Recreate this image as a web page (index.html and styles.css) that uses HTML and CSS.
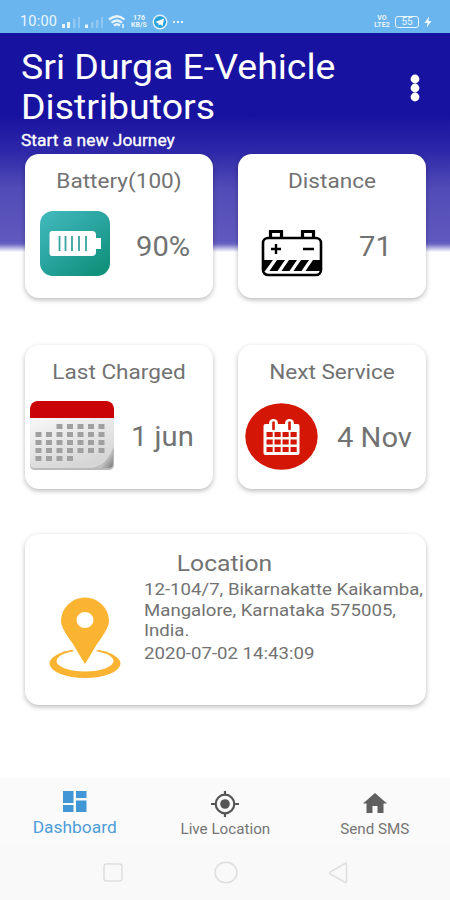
FILE: index.html
```html
<!DOCTYPE html>
<html lang="en">
<head>
<meta charset="utf-8">
<title>Sri Durga E-Vehicle Distributors</title>
<link rel="stylesheet" href="styles.css">
</head>
<body>
<div class="status">
  <span class="clock">10:00</span>
  <svg class="signals" width="42" height="14" viewBox="0 0 42 14" fill="#e9f5fd">
    <path d="M0 9h3v4H0zM5 7h3v6H5z"/><path opacity=".3" d="M11 4h2.500v9H11zM16 2h2v11h-2zM29 7h2.500v6H29zM34 5h2.500v8H34zM39 2h2v11h-2z"/><path d="M23 9.500h3V13h-3z"/>
  </svg>
  <svg class="wifi" width="18" height="14" viewBox="0 0 18 14" fill="none" stroke="#e9f5fd" stroke-width="2.300">
    <path d="M1 4.500q8-6.500 15.500 0M3.500 7.700q5.500-4.500 10.500 0M6 10.500q3-2.500 6 0"/><path d="M9 12.500h.1M15 9v4" stroke-width="1.500"/>
  </svg>
  <span class="tiny speed">176<br>KB/S</span>
  <svg class="plane" width="16" height="16" viewBox="0 0 16 16"><circle cx="8" cy="8" r="6.800" fill="#2aa3dc" stroke="#e2f3fc" stroke-width="1.400"/><path d="M3.500 8 12 4.500 10.600 12 8 10.200 6.500 11.500 6.300 9.200Z" fill="#fff"/></svg>
  <span class="dots"><i></i><i></i><i></i></span>
  <span class="tiny volte">VO<br>LTE2</span>
  <span class="level">55</span>
  <svg class="bolt" width="8" height="12" viewBox="0 0 8 12"><path d="M5 .5.500 7H3.500L2.800 11.500 7.500 5H4.500Z" fill="#f0f9ff"/></svg>
</div>
<main>
  <header>
    <div>
      <h1>Sri Durga E-Vehicle<br>Distributors</h1>
      <p class="tagline">Start a new Journey</p>
    </div>
    <svg class="menu" width="12" height="28" viewBox="0 0 12 28" fill="#fff"><circle cx="6" cy="5" r="4.400"/><circle cx="6" cy="14" r="4.400"/><circle cx="6" cy="23" r="4.400"/></svg>
  </header>
  <section class="cards">
    <article class="card battery">
      <h2>Battery(100)</h2>
      <div class="row">
        <svg width="70" height="65" viewBox="0 0 70 65">
          <defs><linearGradient id="teal" x1="0" y1="0" x2=".8" y2="1"><stop offset="0" stop-color="#43b9bd"/><stop offset=".5" stop-color="#2aa5a1"/><stop offset="1" stop-color="#10917a"/></linearGradient></defs>
          <rect width="70" height="65" rx="13" fill="url(#teal)"/>
          <path d="M12 20H52Q56 20 56 24V27H61V38H56V41Q56 45 52 45H12Q9.500 45 9.500 42V23Q9.500 20 12 20Z" fill="#fff"/>
          <path d="M19.500 25V40M25.500 25V40M32 25V40M39 25V40M46 25V40" stroke="#38a49f" stroke-width="1.800"/>
        </svg>
        <span class="value">90%</span>
      </div>
    </article>
    <article class="card distance">
      <h2>Distance</h2>
      <div class="row">
        <svg width="62" height="48" viewBox="0 0 62 48">
          <g fill="none" stroke="#000"><path stroke-width="3.200" d="M9.500 9V2.500H20.500V9M41.500 9V2.500H52.500V9"/><rect stroke-width="2.600" x="2" y="9" width="58" height="37" rx="5"/></g>
          <path d="M10 20H20M15 15V25M42 20H53" stroke="#000" stroke-width="2.400"/>
          <path d="M2 31H12L4 42H2ZM16 31H24L16.500 42H8.500ZM28 31H36L28.500 42H20.500ZM40 31H48L40.500 42H32.500ZM52 31H60V42H44.500Z"/>
        </svg>
        <span class="value">71</span>
      </div>
    </article>
    <article class="card charged">
      <h2>Last Charged</h2>
      <div class="row">
        <svg width="84" height="69" viewBox="0 0 84 69">
          <defs><linearGradient id="page" x1="0" y1="0" x2=".5" y2="1"><stop offset="0" stop-color="#f8f8f8"/><stop offset="1" stop-color="#d6d6d6"/></linearGradient>
          <linearGradient id="fold" x1=".3" y1=".3" x2="1" y2="1"><stop offset="0" stop-color="#eee"/><stop offset="1" stop-color="#777"/></linearGradient></defs>
          <path d="M0 16H84V64Q84 69 78 69H5Q0 69 0 64Z" fill="#b9b9b9"/>
          <path d="M0 16H84V46Q78 64 62 67H5Q0 67 0 62Z" fill="url(#page)"/>
          <path d="M83 46Q80 58 68 67H79Q83 67 83 62Z" fill="url(#fold)"/>
          <path d="M0 17V7Q1 1 7 0H77Q83 1 84 7V17Z" fill="#c90306"/>
          <g stroke="#a0a0a0" stroke-width="5" stroke-dasharray="6 4.500"><path d="M26.500 25.500H76M5.500 33.500H76M5.500 41.500H76M5.500 49.500H76M5.500 57.500H44"/></g>
        </svg>
        <span class="value">1 jun</span>
      </div>
    </article>
    <article class="card service">
      <h2>Next Service</h2>
      <div class="row">
        <svg width="73" height="67" viewBox="0 0 73 67">
          <ellipse cx="36.500" cy="33.500" rx="36.200" ry="33.300" fill="#d31704"/>
          <rect x="18.500" y="21" width="36" height="31" rx="2" fill="#fff"/>
          <rect x="24" y="16" width="9" height="14" rx="4.500" fill="#fff"/><rect x="40" y="16" width="9" height="14" rx="4.500" fill="#fff"/>
          <path d="M28.500 19.500V26M44.500 19.500V26" stroke="#d31704" stroke-width="2.600" stroke-linecap="round"/>
          <path d="M21.500 31.500H52M21.500 39H52M21.500 46.500H52" stroke="#d31704" stroke-width="4.900" stroke-dasharray="6.200 1.800"/>
        </svg>
        <span class="value">4 Nov</span>
      </div>
    </article>
    <article class="card location">
      <svg width="72" height="82" viewBox="0 0 72 82">
        <ellipse cx="36" cy="66.500" rx="35.500" ry="14.500" fill="#fbb431"/>
        <ellipse cx="36" cy="64" rx="28.500" ry="10.500" fill="#fff"/>
        <path d="M22 48H50L47 56H25Z" fill="#fff"/>
        <path fill-rule="evenodd" fill="#fbb431" d="M36 67Q31 59 24 47Q12 31 12 24A24 23.500 0 0 1 60 24Q60 31 48 47Q41 59 36 67ZM36 15A8.500 8 0 1 0 36 31 8.500 8 0 1 0 36 15Z"/>
      </svg>
      <div class="place">
        <h2>Location</h2>
        <p>12-104/7, Bikarnakatte Kaikamba,<br>Mangalore, Karnataka 575005,<br>India.</p>
        <p class="time">2020-07-02 14:43:09</p>
      </div>
    </article>
  </section>
</main>
<nav class="tabs">
  <a class="active"><svg width="24" height="22" viewBox="0 0 24 22" fill="#4196d6"><path d="M0 0H10.500V12H0ZM13 0H23.500V7H13ZM0 14H10.500V21H0ZM13 9.500H23.500V21H13Z"/></svg><span>Dashboard</span></a>
  <a class="live"><svg width="28" height="26" viewBox="0 0 28 26"><circle cx="14" cy="13" r="9.300" fill="none" stroke="#555" stroke-width="2.200"/><circle cx="14" cy="13" r="4.800" fill="#555"/><path d="M14 0V4M14 22V26M0 13H5M23 13H28" stroke="#555" stroke-width="2.200"/></svg><span>Live Location</span></a>
  <a class="sms"><svg width="24" height="20" viewBox="0 0 24 20" fill="#606060"><path d="M12 0 24 10.500H20.500V20H14.500V13H9.500V20H3.500V10.500H0Z"/></svg><span>Send SMS</span></a>
</nav>
<div class="system">
  <svg width="20" height="19" viewBox="0 0 20 19"><rect x="1" y="1" width="18" height="17" rx="2.500"/></svg>
  <svg width="24" height="23" viewBox="0 0 24 23"><ellipse cx="12" cy="11.500" rx="11" ry="10.300"/></svg>
  <svg width="20" height="22" viewBox="0 0 20 22"><path d="M18.500 2V20Q18.500 21 17.500 20.500L2 12Q1 11 2 10L17.500 1.300Q18.500 1 18.500 2Z"/></svg>
</div>
</body>
</html>
```
FILE: styles.css
```css
* { box-sizing: border-box; }
body { margin: 0; width: 450px; height: 900px; display: flex; flex-direction: column; overflow: hidden; font-family: Roboto, sans-serif; color: #727272; background: #fff; }
h1, h2, p { margin: 0; font-weight: 400; white-space: nowrap; }
svg { display: block; flex: none; }
span { white-space: nowrap; }

.status { height: 33px; padding: 10px 18px 0 20px; display: flex; align-items: center; background: #6bb5ee; color: #e9f5fd; }
.clock { width: 42px; font-size: 14.500px; letter-spacing: .2px; }
.wifi { margin-left: 4px; }
.tiny { font-size: 7px; line-height: 6.500px; font-weight: 700; text-align: center; }
.speed { width: 18px; margin-left: 4px; }
.plane { margin-left: 4px; }
.dots { display: flex; gap: 2px; margin-left: 5px; }
.dots i { width: 2px; height: 2px; background: #e9f5fd; }
.volte { margin-left: auto; width: 18px; }
.level { width: 24px; height: 12px; margin-left: 4px; border: 1px solid #e9f5fd; border-radius: 3px; font-size: 10px; line-height: 10px; text-align: center; }
.bolt { margin-left: 5px; }

main { height: 745px; flex: none; background: linear-gradient(#1812a0 0, #1812a0 82px, #2d27a9 118px, #514bb7 155px, #5f59bf 208px, #6a65c4 211px, #fff 219px); }
header { height: 121px; padding: 14px 29px 0 21px; display: flex; justify-content: space-between; color: #fff; }
h1 { font-size: 35.500px; line-height: 40px; transform: scaleX(1.055); transform-origin: left; }
.tagline { font-size: 16px; line-height: 20px; margin-top: 4px; -webkit-text-stroke: .3px #fff; transform: scaleX(1.087); transform-origin: left; }
.menu { margin-top: 27px; }

.cards { padding: 0 24px 0 25px; display: grid; grid-template-columns: 188px 188px; grid-template-rows: 144px 144px 170px; gap: 46.500px 25px; }
.card { background: #fff; border-radius: 14px; box-shadow: 0 2px 5px rgba(0,0,0,.27); }
.card h2 { font-size: 21px; line-height: 26px; padding-top: 14px; text-align: center; transform: scaleX(1.075); }
.row { display: flex; }
.value { font-size: 27px; line-height: 32px; margin-top: 20px; transform: scaleX(1.08); transform-origin: left; }
.battery .row { padding: 17px 0 0 15px; gap: 26px; }
.distance .row { padding: 35px 0 0 23px; gap: 36px; }
.distance .value { margin-top: 2px; }
.charged .row { padding: 16px 0 0 5px; gap: 17px; }
.service .row { padding: 18px 0 0 7px; gap: 19px; }
.service .value { margin-top: 19px; }
.location { grid-column: span 2; display: flex; padding-left: 24px; margin-top: -1px; height: 171px; }
.location svg { margin-top: 63px; }
.place { margin-left: 23px; font-size: 17px; line-height: 20.500px; transform: scaleX(1.095); transform-origin: left; }
.location h2 { font-size: 22.500px; line-height: 28px; padding: 15px 0 0 30px; text-align: left; transform: none; }
.place p { margin-top: 2px; }

.tabs { height: 67px; flex: none; display: grid; grid-template-columns: repeat(3, 1fr); background: #fafafa; }
.tabs a { display: flex; flex-direction: column; align-items: center; font-size: 14px; color: #757575; }
.tabs span { line-height: 18px; transform: scaleX(1.085); }
.active svg { margin-top: 13px; }
.tabs .active { font-size: 16px; color: #4e9dd9; }
.active span { margin-top: 6px; }
.live svg { margin-top: 13px; }
.live span { margin-top: 3px; }
.sms svg { margin-top: 15px; }
.sms span { margin-top: 7px; }
.system { flex: 1; display: flex; align-items: center; justify-content: space-between; padding: 0 102px 0 103px; background: #f9f9f9; }
.system svg { fill: none; stroke: #dedede; stroke-width: 1.500; }
```
